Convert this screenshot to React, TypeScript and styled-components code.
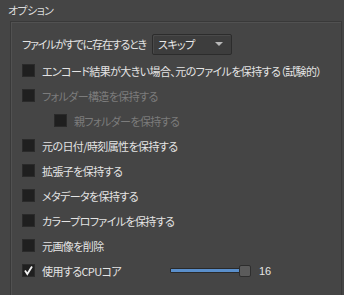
import * as React from 'react'
import styled, { createGlobalStyle } from 'styled-components'

const GlobalStyle = createGlobalStyle`
  html, body {
    margin: 0;
    padding: 0;
    background: #454545;
  }
`

const options = [
  { label: 'エンコード結果が大きい場合、元のファイルを保持する（試験的）' },
  { label: 'フォルダー構造を保持する', disabled: true },
  { label: '親フォルダーを保持する', disabled: true, nested: true },
  { label: '元の日付/時刻属性を保持する' },
  { label: '拡張子を保持する' },
  { label: 'メタデータを保持する' },
  { label: 'カラープロファイルを保持する' },
  { label: '元画像を削除' },
]

const CheckMark = () => (
  <svg width="11" height="11" viewBox="0 0 11 11">
    <path d="M2 5.5 L4.3 9 L9 1.5" fill="none" stroke="#f2f2f2" strokeWidth="1.8" />
  </svg>
)

const App: React.FC = () => {
  const cores = 16
  const max = 16
  return (
    <>
      <GlobalStyle />
      <Panel>
        <Title>オプション</Title>
        <GroupBox>
          <ComboRow>
            <Label $tight>ファイルがすでに存在するとき</Label>
            <Combo>
              <span>スキップ</span>
              <Arrow />
            </Combo>
          </ComboRow>
          {options.map((o) => (
            <CheckRow key={o.label} $nested={o.nested}>
              <Box />
              <Label $disabled={o.disabled}>{o.label}</Label>
            </CheckRow>
          ))}
          <CheckRow>
            <CpuLabel>
              <Box>
                <CheckMark />
              </Box>
              <Label>使用するCPUコア</Label>
            </CpuLabel>
            <Slider>
              <Groove>
                <Fill style={{ width: `${(cores / max) * 100}%` }} />
              </Groove>
              <Handle />
            </Slider>
            <Value>{cores}</Value>
          </CheckRow>
        </GroupBox>
      </Panel>
    </>
  )
}

const Panel = styled.div`
  width: 344px;
  height: 295px;
  overflow: hidden;
  background: #454545;
  font-family: 'Noto Sans CJK JP', 'Noto Sans', sans-serif;
  font-size: 11px;
  letter-spacing: -0.6px;
  font-feature-settings: 'palt';
  color: #e4e4e4;
`

const Title = styled.div`
  height: 21px;
  line-height: 20px;
  padding-left: 8px;
  color: #dcdcdc;
`

const GroupBox = styled.div`
  margin: 0 2px 0 10px;
  height: 300px;
  border: 1px solid #393939;
  box-shadow: inset 1px 1px 0 #515151;
  padding: 11px 0 0 11px;
  box-sizing: border-box;
`

const ComboRow = styled.div`
  display: flex;
  align-items: center;
  gap: 6px;
  height: 22px;
  margin-bottom: 3px;
`

const Label = styled.span<{ $disabled?: boolean; $tight?: boolean }>`
  white-space: nowrap;
  letter-spacing: ${(p) => (p.$tight ? '-1.2px' : '-0.6px')};
  color: ${(p) => (p.$disabled ? '#7c7c7c' : '#e4e4e4')};
`

const Combo = styled.div`
  width: 80px;
  height: 21px;
  box-sizing: border-box;
  display: flex;
  align-items: center;
  justify-content: space-between;
  padding: 0 8px 0 5px;
  background: #3d3d3d;
  border: 1px solid #2c2c2c;
  box-shadow: inset 1px 1px 0 #4a4a4a;
  border-radius: 2px;
  color: #e8e8e8;
`

const Arrow = styled.span`
  width: 0;
  height: 0;
  border-left: 4px solid transparent;
  border-right: 4px solid transparent;
  border-top: 4px solid #b8b8b8;
`

const CheckRow = styled.div<{ $nested?: boolean }>`
  display: flex;
  align-items: center;
  gap: 7px;
  height: 25px;
  padding-left: ${(p) => (p.$nested ? '32px' : '0')};
`

const Box = styled.span`
  width: 13px;
  height: 13px;
  box-sizing: border-box;
  background: #1f1f1f;
  border: 1px solid #2a2a2a;
  display: flex;
  align-items: center;
  justify-content: center;
  flex-shrink: 0;
`

const CpuLabel = styled.div`
  display: flex;
  align-items: center;
  gap: 7px;
  width: 141px;
`

const Slider = styled.div`
  position: relative;
  width: 81px;
  height: 12px;
  display: flex;
  align-items: center;
`

const Groove = styled.div`
  width: 74px;
  height: 5px;
  box-sizing: border-box;
  background: #2a2a2a;
  border: 1px solid #2a2a2a;
  border-radius: 1px;
`

const Fill = styled.div`
  height: 100%;
  background: #5a8fcb;
`

const Handle = styled.span`
  position: absolute;
  left: 69px;
  top: 0;
  width: 12px;
  height: 12px;
  box-sizing: border-box;
  background: #5b5b5b;
  border: 1px solid #2e2e2e;
  border-radius: 2px;
`

const Value = styled.span`
  margin-left: 1px;
  font-family: 'Liberation Sans', 'Noto Sans', sans-serif;
  letter-spacing: 0;
  color: #e4e4e4;
`

export default App
